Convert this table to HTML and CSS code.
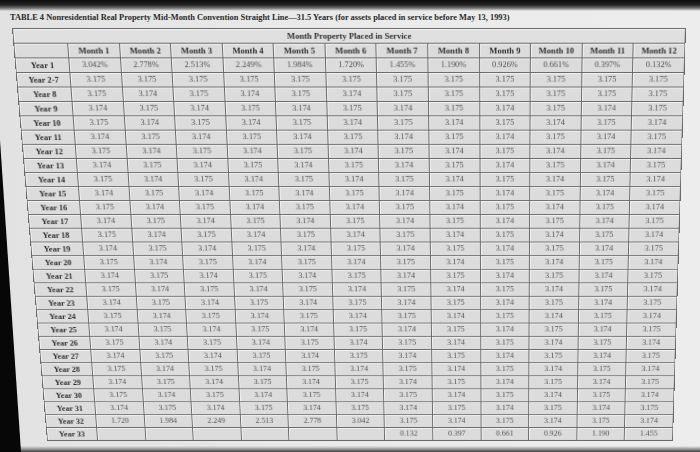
FILE: index.html
```html
<!DOCTYPE html>
<html>
<head>
<meta charset="utf-8">
<link rel="stylesheet" href="styles.css">
</head>
<body>
<div class="paper">
<div class="edge"></div>
<div class="sheet">
<p class="title">TABLE 4 Nonresidential Real Property Mid-Month Convention Straight Line—31.5 Years (for assets placed in service before May 13, 1993)</p>
<table class="mact">
<colgroup><col class="c-lab"><col span="12" class="c-m"></colgroup>
<thead>
<tr class="r-group"><th class="group" colspan="13">Month Property Placed in Service</th></tr>
<tr class="r-head"><th class="corner"></th><th>Month 1</th><th>Month 2</th><th>Month 3</th><th>Month 4</th><th>Month 5</th><th>Month 6</th><th>Month 7</th><th>Month 8</th><th>Month 9</th><th>Month 10</th><th>Month 11</th><th>Month 12</th></tr>
</thead>
<tbody>
<tr><th>Year 1</th><td>3.042%</td><td>2.778%</td><td>2.513%</td><td>2.249%</td><td>1.984%</td><td>1.720%</td><td>1.455%</td><td>1.190%</td><td>0.926%</td><td>0.661%</td><td>0.397%</td><td>0.132%</td></tr>
<tr><th>Year 2-7</th><td>3.175</td><td>3.175</td><td>3.175</td><td>3.175</td><td>3.175</td><td>3.175</td><td>3.175</td><td>3.175</td><td>3.175</td><td>3.175</td><td>3.175</td><td>3.175</td></tr>
<tr><th>Year 8</th><td>3.175</td><td>3.174</td><td>3.175</td><td>3.174</td><td>3.175</td><td>3.174</td><td>3.175</td><td>3.175</td><td>3.175</td><td>3.175</td><td>3.175</td><td>3.175</td></tr>
<tr><th>Year 9</th><td>3.174</td><td>3.175</td><td>3.174</td><td>3.175</td><td>3.174</td><td>3.175</td><td>3.174</td><td>3.175</td><td>3.174</td><td>3.175</td><td>3.174</td><td>3.175</td></tr>
<tr><th>Year 10</th><td>3.175</td><td>3.174</td><td>3.175</td><td>3.174</td><td>3.175</td><td>3.174</td><td>3.175</td><td>3.174</td><td>3.175</td><td>3.174</td><td>3.175</td><td>3.174</td></tr>
<tr><th>Year 11</th><td>3.174</td><td>3.175</td><td>3.174</td><td>3.175</td><td>3.174</td><td>3.175</td><td>3.174</td><td>3.175</td><td>3.174</td><td>3.175</td><td>3.174</td><td>3.175</td></tr>
<tr><th>Year 12</th><td>3.175</td><td>3.174</td><td>3.175</td><td>3.174</td><td>3.175</td><td>3.174</td><td>3.175</td><td>3.174</td><td>3.175</td><td>3.174</td><td>3.175</td><td>3.174</td></tr>
<tr><th>Year 13</th><td>3.174</td><td>3.175</td><td>3.174</td><td>3.175</td><td>3.174</td><td>3.175</td><td>3.174</td><td>3.175</td><td>3.174</td><td>3.175</td><td>3.174</td><td>3.175</td></tr>
<tr><th>Year 14</th><td>3.175</td><td>3.174</td><td>3.175</td><td>3.174</td><td>3.175</td><td>3.174</td><td>3.175</td><td>3.174</td><td>3.175</td><td>3.174</td><td>3.175</td><td>3.174</td></tr>
<tr><th>Year 15</th><td>3.174</td><td>3.175</td><td>3.174</td><td>3.175</td><td>3.174</td><td>3.175</td><td>3.174</td><td>3.175</td><td>3.174</td><td>3.175</td><td>3.174</td><td>3.175</td></tr>
<tr><th>Year 16</th><td>3.175</td><td>3.174</td><td>3.175</td><td>3.174</td><td>3.175</td><td>3.174</td><td>3.175</td><td>3.174</td><td>3.175</td><td>3.174</td><td>3.175</td><td>3.174</td></tr>
<tr><th>Year 17</th><td>3.174</td><td>3.175</td><td>3.174</td><td>3.175</td><td>3.174</td><td>3.175</td><td>3.174</td><td>3.175</td><td>3.174</td><td>3.175</td><td>3.174</td><td>3.175</td></tr>
<tr><th>Year 18</th><td>3.175</td><td>3.174</td><td>3.175</td><td>3.174</td><td>3.175</td><td>3.174</td><td>3.175</td><td>3.174</td><td>3.175</td><td>3.174</td><td>3.175</td><td>3.174</td></tr>
<tr><th>Year 19</th><td>3.174</td><td>3.175</td><td>3.174</td><td>3.175</td><td>3.174</td><td>3.175</td><td>3.174</td><td>3.175</td><td>3.174</td><td>3.175</td><td>3.174</td><td>3.175</td></tr>
<tr><th>Year 20</th><td>3.175</td><td>3.174</td><td>3.175</td><td>3.174</td><td>3.175</td><td>3.174</td><td>3.175</td><td>3.174</td><td>3.175</td><td>3.174</td><td>3.175</td><td>3.174</td></tr>
<tr><th>Year 21</th><td>3.174</td><td>3.175</td><td>3.174</td><td>3.175</td><td>3.174</td><td>3.175</td><td>3.174</td><td>3.175</td><td>3.174</td><td>3.175</td><td>3.174</td><td>3.175</td></tr>
<tr><th>Year 22</th><td>3.175</td><td>3.174</td><td>3.175</td><td>3.174</td><td>3.175</td><td>3.174</td><td>3.175</td><td>3.174</td><td>3.175</td><td>3.174</td><td>3.175</td><td>3.174</td></tr>
<tr><th>Year 23</th><td>3.174</td><td>3.175</td><td>3.174</td><td>3.175</td><td>3.174</td><td>3.175</td><td>3.174</td><td>3.175</td><td>3.174</td><td>3.175</td><td>3.174</td><td>3.175</td></tr>
<tr><th>Year 24</th><td>3.175</td><td>3.174</td><td>3.175</td><td>3.174</td><td>3.175</td><td>3.174</td><td>3.175</td><td>3.174</td><td>3.175</td><td>3.174</td><td>3.175</td><td>3.174</td></tr>
<tr><th>Year 25</th><td>3.174</td><td>3.175</td><td>3.174</td><td>3.175</td><td>3.174</td><td>3.175</td><td>3.174</td><td>3.175</td><td>3.174</td><td>3.175</td><td>3.174</td><td>3.175</td></tr>
<tr><th>Year 26</th><td>3.175</td><td>3.174</td><td>3.175</td><td>3.174</td><td>3.175</td><td>3.174</td><td>3.175</td><td>3.174</td><td>3.175</td><td>3.174</td><td>3.175</td><td>3.174</td></tr>
<tr><th>Year 27</th><td>3.174</td><td>3.175</td><td>3.174</td><td>3.175</td><td>3.174</td><td>3.175</td><td>3.174</td><td>3.175</td><td>3.174</td><td>3.175</td><td>3.174</td><td>3.175</td></tr>
<tr><th>Year 28</th><td>3.175</td><td>3.174</td><td>3.175</td><td>3.174</td><td>3.175</td><td>3.174</td><td>3.175</td><td>3.174</td><td>3.175</td><td>3.174</td><td>3.175</td><td>3.174</td></tr>
<tr><th>Year 29</th><td>3.174</td><td>3.175</td><td>3.174</td><td>3.175</td><td>3.174</td><td>3.175</td><td>3.174</td><td>3.175</td><td>3.174</td><td>3.175</td><td>3.174</td><td>3.175</td></tr>
<tr><th>Year 30</th><td>3.175</td><td>3.174</td><td>3.175</td><td>3.174</td><td>3.175</td><td>3.174</td><td>3.175</td><td>3.174</td><td>3.175</td><td>3.174</td><td>3.175</td><td>3.174</td></tr>
<tr><th>Year 31</th><td>3.174</td><td>3.175</td><td>3.174</td><td>3.175</td><td>3.174</td><td>3.175</td><td>3.174</td><td>3.175</td><td>3.174</td><td>3.175</td><td>3.174</td><td>3.175</td></tr>
<tr><th>Year 32</th><td>1.720</td><td>1.984</td><td>2.249</td><td>2.513</td><td>2.778</td><td>3.042</td><td>3.175</td><td>3.174</td><td>3.175</td><td>3.174</td><td>3.175</td><td>3.174</td></tr>
<tr><th>Year 33</th><td></td><td></td><td></td><td></td><td></td><td></td><td>0.132</td><td>0.397</td><td>0.661</td><td>0.926</td><td>1.190</td><td>1.455</td></tr>
</tbody>
</table>
</div>
</div>
</body>
</html>
```

FILE: styles.css
```css
html, body {
  margin: 0;
  padding: 0;
  background: #e8e8e8;
}
body {
  width: 700px;
  height: 452px;
  overflow: hidden;
  font-family: "Liberation Serif", "Times New Roman", serif;
  color: #3a3a3a;
}
.paper {
  display: flex;
  width: 700px;
  height: 452px;
  overflow: hidden;
  background-repeat: no-repeat;
  background-image:
    linear-gradient(to bottom, #0b0b0b 0, #262626 5px, #6e6e6e 8px, rgba(232,232,232,0) 11px),
    linear-gradient(to top, #3c3c3c 0, #9a9a9a 3px, rgba(232,232,232,0) 6px),
    linear-gradient(to right, #e2e2e2, #eaeaea 50%, #ededed);
  background-size: 100% 12px, 100% 6px, 100% 100%;
  background-position: 0 0, 0 100%, 0 0;
}
.edge {
  flex: 0 0 21px;
  height: 452px;
  background: #070707;
  clip-path: polygon(0 140px, 21px 452px, 0 452px);
}
.sheet {
  flex: 1 1 auto;
  margin-left: -21px;
  padding-top: 13px;
  min-width: 0;
}
.title {
  margin: 0 0 5px 10px;
  font-size: 8.4px;
  line-height: 10px;
  font-weight: bold;
  color: #2a2a2a;
  white-space: nowrap;
}
.mact {
  margin-left: 12px;
  width: 674px;
  table-layout: fixed;
  border-collapse: separate;
  border-spacing: 0;
  border-top: 1px solid #6a6a6a;
  border-left: 1px solid #6a6a6a;
  background: #dcdcdc;
  transform-origin: 50% 0;
  transform: perspective(1000px) rotateX(-9.8deg) skewX(1.5deg);
}
.c-lab { width: 54px; }
.mact tr {
  height: 15px;
}
.mact th, .mact td {
  border-right: 1px solid #6a6a6a;
  border-bottom: 1px solid #6a6a6a;
  box-shadow: inset 1px 1px 0 #f2f2f2;
  padding: 0;
  text-align: center;
  line-height: 12px;
  font-size: 8.4px;
  white-space: nowrap;
  overflow: hidden;
}
.mact td {
  color: #505050;
}
.mact th {
  font-weight: bold;
  color: #2e2e2e;
  font-size: 8.6px;
}
.mact .group {
  background: #e0e0e0;
}
```
